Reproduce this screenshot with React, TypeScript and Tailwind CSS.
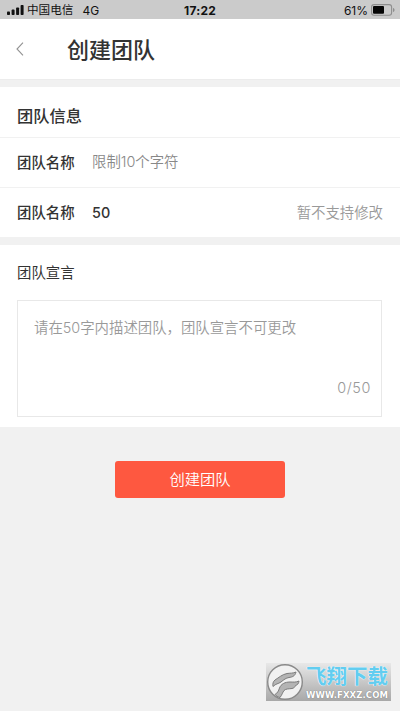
import React from "react";

function SignalBars() {
  return (
    <svg width="17" height="10" viewBox="0 0 17 10" fill="#111">
      <rect x="0" y="6.5" width="3" height="3.5" rx="0.8" />
      <rect x="4.6" y="4.6" width="3" height="5.4" rx="0.8" />
      <rect x="9.1" y="2.4" width="3" height="7.6" rx="0.8" />
      <rect x="13.6" y="0" width="3" height="10" rx="0.8" />
    </svg>
  );
}

function Battery() {
  return (
    <svg width="24" height="12" viewBox="0 0 24 12" fill="none">
      <rect x="0.6" y="0.6" width="20" height="10.6" rx="2.4" stroke="#8e8e8e" strokeWidth="1.1" />
      <rect x="2" y="2" width="11" height="7.8" rx="1" fill="#050505" />
      <path d="M22 4v4c1-.3 1.5-1 1.5-2S23 4.300 22 4z" fill="#8e8e8e" />
    </svg>
  );
}

function StatusBar() {
  return (
    <div className="grid h-[19px] grid-cols-3 items-center bg-[#cbcbcb] text-[#111]">
      <div className="flex items-center pl-[7px]">
        <SignalBars />
        <span className="ml-[3px] pt-px text-[11.600px] leading-[19px]">中国电信</span>
        <span className="ml-[9px] pt-px text-[12px] leading-[19px]">4G</span>
      </div>
      <div className="pt-px text-center text-[12px] leading-[19px] font-bold tracking-[0.2px]">17:22</div>
      <div className="flex items-center justify-end pr-[5px]">
        <span className="mr-[3px] pt-px text-[12px] leading-[18px]">61%</span>
        <Battery />
      </div>
    </div>
  );
}

function Watermark() {
  return (
    <div className="absolute top-[663px] left-[266px] flex h-[38px] w-[125px] bg-linear-to-b from-[#e8e8e8] to-[#a8a8a8]">
      <svg width="38" height="38" viewBox="0 0 38 38" className="shrink-0">
        <circle cx="19" cy="19" r="17.300" fill="#f1f1f1" stroke="#8a8a8a" strokeWidth="1.400" />
        <path
          d="M30 9c-3 1.500-6 1-9 1.500-5 1-8 4-12 6.500-2 1.500-2.500 4-2 6.500 3-3 5-2.500 8-4.500 3-2.500 5-4 8-4.500 3-.5 6-1 7-5.500z"
          fill="#b4b4b4"
          stroke="#7c7c7c"
          strokeWidth="1"
          strokeLinejoin="round"
        />
        <path
          d="M33 18c-3 1.500-6 1-9 1-5 0-9 2-10.500 6-1 3-2 5-4.500 6.500 1 1.500 3 2.500 5 3 2-2.500 2.500-5 4-7 2-2 5-1.500 8-2 2-.4 3-1.500 3.500-3 2-.5 3.200-2 3.500-4.500z"
          fill="#b4b4b4"
          stroke="#7c7c7c"
          strokeWidth="1"
          strokeLinejoin="round"
        />
      </svg>
      <div className="flex flex-col pl-[2px]">
        <div className="h-[26px] pt-[3px] text-[20.500px] leading-[22px] font-bold whitespace-nowrap text-[#62cdf0] [text-shadow:0_0_1px_#fff,0_0_1px_#fff]">
          飞翔下载
        </div>
        <div className="mt-px h-[11px] w-[85px] font-['DejaVu_Sans',sans-serif] text-[8.500px] leading-[10px] font-bold tracking-[0.1px] whitespace-nowrap text-white [text-shadow:0_0_1px_#666]">
          WWW.FXXZ.COM
        </div>
      </div>
    </div>
  );
}

export default function App() {
  return (
    <div className="relative h-[711px] w-[400px] overflow-hidden bg-[#f1f1f1] font-['Inter','Noto_Sans_CJK_SC',sans-serif] text-[#333]">
      <StatusBar />
      <header className="flex h-[61px] items-center border-b border-[#ececec] bg-white">
        <svg width="8" height="14" viewBox="0 0 8 14" fill="none" className="ml-[16px]">
          <path d="M7 0.700L1 7l6 6.300" stroke="#929292" strokeWidth="1.100" />
        </svg>
        <h1 className="ml-[43px] pt-px text-[22px] leading-[30px] font-medium">创建团队</h1>
      </header>

      <section className="mt-[7px] bg-white px-[17px]">
        <h2 className="-mx-[17px] flex h-[51px] items-center border-b border-[#f1f1f1] px-[17px] pt-[9px] text-[16.300px] font-medium">
          团队信息
        </h2>
        <div className="-mx-[17px] flex h-[50px] items-center border-b border-[#f1f1f1] px-[17px] text-[14.400px]">
          <span className="w-[75px] font-medium">团队名称</span>
          <span className="pb-px font-[350] text-[#888]">限制10个字符</span>
        </div>
        <div className="flex h-[49px] items-center text-[14.400px]">
          <span className="w-[75px] font-medium">团队名称</span>
          <span className="font-medium">50</span>
          <span className="ml-auto font-[350] text-[#999]">暂不支持修改</span>
        </div>
      </section>

      <section className="mt-[8px] h-[182px] bg-white px-[17px] pt-[17px]">
        <h3 className="h-[38px] pt-px text-[14.400px] leading-[20px]">团队宣言</h3>
        <div className="flex h-[117px] w-[365px] flex-col justify-between border border-[#e8e8e8] pt-[17px] pr-[10px] pb-[18px] pl-[16px] text-[14.400px] leading-[20px] font-[350] text-[#999]">
          <p className="whitespace-nowrap">请在50字内描述团队，团队宣言不可更改</p>
          <p className="text-right tracking-[0.6px]">0/50</p>
        </div>
      </section>

      <button className="mx-auto mt-[34px] flex h-[37px] w-[170px] items-center justify-center rounded-[3px] bg-[#fe5840] pt-px text-[15.300px] font-[350] text-white">
        创建团队
      </button>

      <Watermark />
    </div>
  );
}
